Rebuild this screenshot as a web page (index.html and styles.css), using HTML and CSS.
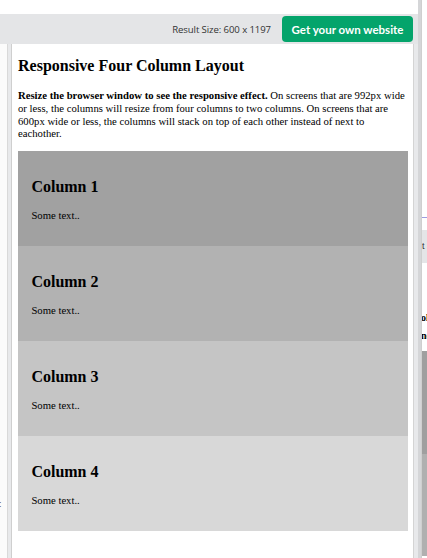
FILE: index.html
```html
<!DOCTYPE html>
<html lang="en">
<head>
<meta charset="utf-8">
<title>Responsive Four Column Layout</title>
<link rel="stylesheet" href="styles.css">
</head>
<body>
<div class="page">
  <div class="main">
    <div class="topgap"></div>
    <div class="toolbar">
      <span class="size">Result Size: 600 x 1197</span>
      <a class="btn" href="#">Get your own website</a>
    </div>
    <div class="workspace">
      <div class="leftpane"><span class="cut">:</span></div>
      <div class="gutter"></div>
      <div class="frame">
        <div class="doc">
          <h2 class="title">Responsive Four Column Layout</h2>
          <p class="intro"><b>Resize the browser window to see the responsive effect.</b> On screens that are 992px wide or less, the columns will resize from four columns to two columns. On screens that are 600px wide or less, the columns will stack on top of each other instead of next to eachother.</p>
          <div class="row">
            <div class="column c1"><h2 class="col-title">Column 1</h2><p class="col-text">Some text..</p></div>
            <div class="column c2"><h2 class="col-title">Column 2</h2><p class="col-text">Some text..</p></div>
            <div class="column c3"><h2 class="col-title">Column 3</h2><p class="col-text">Some text..</p></div>
            <div class="column c4"><h2 class="col-title">Column 4</h2><p class="col-text">Some text..</p></div>
          </div>
        </div>
      </div>
      <div class="gutter-r"></div>
    </div>
  </div>
  <div class="scroll"></div>
  <div class="peek">
    <div class="peek-line"></div>
    <div class="peek-band">t S</div>
    <div class="peek-text">ol<br>ne</div>
    <div class="peek-block b1"></div>
    <div class="peek-block b2"></div>
  </div>
</div>
</body>
</html>
```
FILE: styles.css
```css
html, body {
  margin: 0;
  padding: 0;
  background: #ffffff;
}
.page {
  display: flex;
  width: 427px;
  height: 558px;
  overflow: hidden;
}
.main {
  width: 418px;
  display: flex;
  flex-direction: column;
}
.topgap {
  height: 14px;
  background: #ffffff;
}
.toolbar {
  height: 30px;
  background: #e4e5e7;
  display: flex;
  align-items: center;
  justify-content: flex-end;
  gap: 11px;
  padding-right: 5px;
}
.size {
  font-family: "Open Sans", sans-serif;
  font-size: 9.6px;
  letter-spacing: -0.1px;
  color: #333333;
}
.btn {
  display: flex;
  align-items: center;
  justify-content: center;
  width: 131px;
  height: 26px;
  border-radius: 4px;
  background: #04a46b;
  color: #ffffff;
  font-family: Lato, sans-serif;
  font-weight: 700;
  font-size: 11.5px;
  text-decoration: none;
}
.workspace {
  flex: 1;
  display: flex;
}
.leftpane {
  width: 7px;
  background: #fbfbfb;
  overflow: hidden;
  padding-top: 455px;
  box-sizing: border-box;
}
.cut {
  display: block;
  margin-left: -1px;
  font-family: "Liberation Sans", sans-serif;
  font-size: 9px;
  color: #555555;
}
.gutter {
  width: 5px;
  box-sizing: border-box;
  background: #e8e9eb;
  border-left: 1px solid #d9d9d9;
  border-right: 1px solid #cfcfcf;
}
.gutter-r {
  width: 5px;
  box-sizing: border-box;
  background: #e8e9eb;
  border-left: 1px solid #d4d4d4;
}
.frame {
  width: 401px;
  background: #ffffff;
  overflow: hidden;
  font-family: "Liberation Serif", "Times New Roman", serif;
  color: #000000;
}
.doc {
  padding: 0.1px 5px 0.1px 6px;
}
.title {
  font-size: 16px;
  font-weight: 700;
  margin: 13.3px 0 13.3px;
}
.intro {
  font-size: 10.7px;
  line-height: 12.9px;
  margin: 10.7px 0 11px;
}
.row {
  display: flex;
  flex-direction: column;
}
.column {
  padding: 13.4px;
}
.c1 { background: #a1a1a1; }
.c2 { background: #b2b2b2; }
.c3 { background: #c5c5c5; }
.c4 { background: #d8d8d8; }
.col-title {
  font-size: 16px;
  font-weight: 700;
  margin: 13.3px 0;
}
.col-text {
  font-size: 10.7px;
  line-height: 12.9px;
  margin: 10.7px 0;
}
.scroll {
  width: 3px;
  background: #d5d6d8;
}
.peek {
  width: 6px;
  overflow: hidden;
  display: flex;
  flex-direction: column;
  background: #ffffff;
  border-left: 1px solid #cfcfcf;
  box-sizing: border-box;
}
.peek-line {
  margin-top: 217px;
  height: 1px;
  background: #9c9ce0;
}
.peek-band {
  margin-top: 12px;
  height: 33px;
  background: #e4e5e7;
  font-family: "Liberation Sans", sans-serif;
  font-size: 9px;
  line-height: 33px;
  white-space: nowrap;
  color: #333333;
}
.peek-text {
  margin-top: 46px;
  font-family: "Liberation Serif", serif;
  font-weight: 700;
  font-size: 10px;
  line-height: 18px;
  white-space: nowrap;
  margin-left: -1px;
}
.peek-block {
  flex: none;
}
.b1 {
  margin-top: 6px;
  height: 103px;
  background: #9f9f9f;
}
.b2 {
  height: 102px;
  background: #b0b0b0;
}
```
